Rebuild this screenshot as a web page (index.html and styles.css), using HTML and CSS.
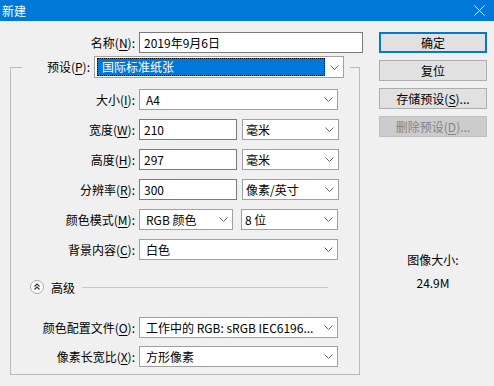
FILE: index.html
```html
<!DOCTYPE html>
<html lang="zh">
<head>
    <meta charset="UTF-8">
    <title>新建</title>
    <link rel="stylesheet" href="styles.css">
</head>
<body>

    <div class="titlebar">
        <span>新建</span>
        <svg class="close" width="11" height="11" viewBox="0 0 11 11"><path d="M0.5 0.5 L10.5 10.5 M10.5 0.5 L0.5 10.5" stroke="#fff" stroke-width="1"/></svg>
    </div>

    <div class="dialog">
        <div class="main">
            <div class="row name-row">
                <span class="label">名称(<u>N</u>):</span>
                <div class="field input name">2019年9月6日</div>
            </div>

            <fieldset class="group">
                <legend>
                    <span class="label">预设(<u>P</u>):</span>
                    <div class="field select preset">
                        <span class="picked">国际标准纸张</span>
                        <svg class="chev" width="9" height="5" viewBox="0 0 9 5"><path d="M0.5 0.5 L4.5 4.5 L8.5 0.5" fill="none" stroke="#666"/></svg>
                    </div>
                </legend>

                <div class="rows">
                    <div class="row">
                        <span class="label">大小(<u>I</u>):</span>
                        <div class="field select wide">A4<svg class="chev" width="9" height="5" viewBox="0 0 9 5"><path d="M0.5 0.5 L4.5 4.5 L8.5 0.5" fill="none" stroke="#666"/></svg></div>
                    </div>
                    <div class="row">
                        <span class="label">宽度(<u>W</u>):</span>
                        <div class="field input num">210</div>
                        <div class="field select unit">毫米<svg class="chev" width="9" height="5" viewBox="0 0 9 5"><path d="M0.5 0.5 L4.5 4.5 L8.5 0.5" fill="none" stroke="#666"/></svg></div>
                    </div>
                    <div class="row">
                        <span class="label">高度(<u>H</u>):</span>
                        <div class="field input num">297</div>
                        <div class="field select unit">毫米<svg class="chev" width="9" height="5" viewBox="0 0 9 5"><path d="M0.5 0.5 L4.5 4.5 L8.5 0.5" fill="none" stroke="#666"/></svg></div>
                    </div>
                    <div class="row">
                        <span class="label">分辨率(<u>R</u>):</span>
                        <div class="field input num">300</div>
                        <div class="field select unit">像素/英寸<svg class="chev" width="9" height="5" viewBox="0 0 9 5"><path d="M0.5 0.5 L4.5 4.5 L8.5 0.5" fill="none" stroke="#666"/></svg></div>
                    </div>
                    <div class="row">
                        <span class="label">颜色模式(<u>M</u>):</span>
                        <div class="field select mode">RGB 颜色<svg class="chev" width="9" height="5" viewBox="0 0 9 5"><path d="M0.5 0.5 L4.5 4.5 L8.5 0.5" fill="none" stroke="#666"/></svg></div>
                        <div class="field select unit">8 位<svg class="chev" width="9" height="5" viewBox="0 0 9 5"><path d="M0.5 0.5 L4.5 4.5 L8.5 0.5" fill="none" stroke="#666"/></svg></div>
                    </div>
                    <div class="row">
                        <span class="label">背景内容(<u>C</u>):</span>
                        <div class="field select wide">白色<svg class="chev" width="9" height="5" viewBox="0 0 9 5"><path d="M0.5 0.5 L4.5 4.5 L8.5 0.5" fill="none" stroke="#666"/></svg></div>
                    </div>
                </div>

                <div class="advanced">
                    <svg class="toggle" width="14" height="14" viewBox="0 0 14 14">
                        <circle cx="7" cy="7" r="6.5" fill="#fff" stroke="#a8a8a8"/>
                        <path d="M4.5 6.5 L7 4 L9.5 6.5 M4.5 9.5 L7 7 L9.5 9.5" fill="none" stroke="#333" stroke-width="1.2"/>
                    </svg>
                    <span>高级</span>
                    <span class="rule"></span>
                </div>

                <div class="rows lower">
                    <div class="row">
                        <span class="label">颜色配置文件(<u>O</u>):</span>
                        <div class="field select wide">工作中的 RGB: sRGB IEC6196...<svg class="chev" width="9" height="5" viewBox="0 0 9 5"><path d="M0.5 0.5 L4.5 4.5 L8.5 0.5" fill="none" stroke="#666"/></svg></div>
                    </div>
                    <div class="row">
                        <span class="label">像素长宽比(<u>X</u>):</span>
                        <div class="field select wide">方形像素<svg class="chev" width="9" height="5" viewBox="0 0 9 5"><path d="M0.5 0.5 L4.5 4.5 L8.5 0.5" fill="none" stroke="#666"/></svg></div>
                    </div>
                </div>
            </fieldset>
        </div>

        <div class="side">
            <button class="btn default">确定</button>
            <button class="btn">复位</button>
            <button class="btn">存储预设(<u>S</u>)...</button>
            <button class="btn" disabled>删除预设(<u>D</u>)...</button>

            <div class="info">
                <div>图像大小:</div>
                <div>24.9M</div>
            </div>
        </div>
    </div>

</body>
</html>
```

FILE: styles.css
```css
body {
    margin: 0;
    font-family: "Noto Sans CJK SC", "Microsoft YaHei", sans-serif;
    font-size: 12px;
    color: #000;
    background-color: #f0f0f0;
}

u {
    text-decoration-thickness: 1px;
    text-underline-offset: 2px;
}

.titlebar {
    height: 21px;
    background-color: #0078d7;
    color: #fff;
    display: flex;
    align-items: center;
    justify-content: space-between;
    padding: 0 9px 0 2px;
    font-size: 12px;
}

.dialog {
    display: flex;
    gap: 16px;
    padding: 11px 0 0 10px;
}

.main {
    width: 353px;
}

.row {
    display: flex;
    align-items: center;
    gap: 4px;
    height: 21px;
}

.label {
    text-align: right;
    white-space: nowrap;
    line-height: 16px;
}

.name-row .label {
    width: 125px;
}

.field {
    box-sizing: border-box;
    height: 21px;
    line-height: 19px;
    background-color: #fff;
    white-space: nowrap;
    overflow: hidden;
}

.input {
    border: 1px solid #7a7a7a;
    padding-left: 4px;
}

.select {
    border: 1px solid #a0a0a0;
    padding-left: 6px;
    display: flex;
    align-items: center;
    justify-content: space-between;
    padding-right: 4px;
}

.chev {
    flex: none;
}

.name { width: 224px; }
.wide { width: 199px; }
.num { width: 98px; margin-right: 1px; }
.unit { width: 97px; padding-left: 3px; }
.mode { width: 94px; margin-right: 4px; }

.group {
    box-sizing: border-box;
    width: 350px;
    height: 319px;
    margin: 3px 0 0;
    padding: 0;
    border: 1px solid #b9b9b9;
    min-width: 0;
}

.group legend {
    display: flex;
    align-items: center;
    gap: 4px;
    margin-left: 11px;
    padding: 0 6px 0 0;
}

.group legend .label {
    width: 68px;
}

.preset {
    width: 250px;
    height: 22px;
    padding: 2px 4px 2px 2px;
}

.picked {
    box-sizing: border-box;
    width: 228px;
    height: 18px;
    line-height: 16px;
    padding-left: 4px;
    background-color: #0078d7;
    color: #fff;
    border: 1px dotted #000;
}

.rows {
    display: flex;
    flex-direction: column;
    gap: 9px;
    margin-top: 11px;
}

.rows .label {
    width: 124px;
}

.rows.lower {
    margin-top: 23px;
    gap: 8px;
}

.advanced {
    display: flex;
    align-items: center;
    height: 14px;
    margin: 20px 0 0 19px;
}

.advanced .toggle {
    flex: none;
    margin-right: 7px;
}

.advanced .rule {
    width: 246px;
    border-top: 1px solid #c8c8c8;
    margin-left: 7px;
}

.side {
    width: 108px;
    display: flex;
    flex-direction: column;
    gap: 7px;
}

.btn {
    box-sizing: border-box;
    height: 21px;
    padding: 0;
    font-family: inherit;
    font-size: 12px;
    color: #000;
    background-color: #e1e1e1;
    border: 1px solid #adadad;
}

.btn.default {
    border: 2px solid #0078d7;
}

.btn:disabled {
    background-color: #cccccc;
    border-color: #bfbfbf;
    color: #838383;
}

.info {
    margin-top: 108px;
    display: flex;
    flex-direction: column;
    align-items: center;
    gap: 7px;
    line-height: 16px;
}
```
